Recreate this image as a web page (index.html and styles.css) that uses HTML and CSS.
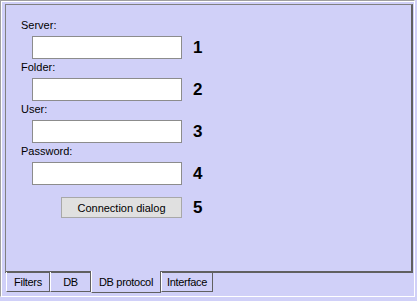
FILE: index.html
```html
<!DOCTYPE html>
<html lang="en">
<head>
    <meta charset="UTF-8">
    <title>DB protocol</title>
    <link rel="stylesheet" href="styles.css">
</head>
<body>
    <div class="frame">
        <div class="page">
            <div class="field">
                <div class="label">Server:</div>
                <div class="row">
                    <input type="text" class="edit">
                    <span class="num">1</span>
                </div>
            </div>
            <div class="field">
                <div class="label">Folder:</div>
                <div class="row">
                    <input type="text" class="edit">
                    <span class="num">2</span>
                </div>
            </div>
            <div class="field">
                <div class="label">User:</div>
                <div class="row">
                    <input type="text" class="edit">
                    <span class="num">3</span>
                </div>
            </div>
            <div class="field">
                <div class="label">Password:</div>
                <div class="row">
                    <input type="password" class="edit">
                    <span class="num">4</span>
                </div>
            </div>
            <div class="row button-row">
                <button class="dialog">Connection dialog</button>
                <span class="num">5</span>
            </div>
        </div>
        <div class="tabs">
            <div class="tab tab-filters">Filters</div>
            <div class="tab tab-db">DB</div>
            <div class="tab tab-protocol active">DB protocol</div>
            <div class="tab tab-interface">Interface</div>
        </div>
    </div>
</body>
</html>
```

FILE: styles.css
```css
* {
    box-sizing: border-box;
}

body {
    margin: 0;
    background: #d0d0f8;
    font-family: "Liberation Sans", Arial, sans-serif;
    font-size: 11px;
    color: #000;
}

.frame {
    width: 415px;
    height: 297px;
    border-top: 1px solid #a0a0a0;
    border-left: 1px solid #a0a0a0;
    border-right: 1px solid #fff;
    border-bottom: 1px solid #fff;
    box-shadow: inset 1px 1px 0 #fff;
    padding: 3px 0 0 4px;
}

.page {
    width: 408px;
    height: 269px;
    border-top: 1px solid #808080;
    border-left: 1px solid #808080;
    border-right: 2px solid #606060;
    border-bottom: 2px solid #606060;
    padding: 14px 0 0 15px;
}

.label {
    height: 13px;
    line-height: 13px;
    margin-bottom: 4px;
}

.field {
    margin-bottom: 2px;
}

.row {
    display: flex;
    align-items: center;
    gap: 11px;
    padding-left: 11px;
}

.edit {
    width: 150px;
    height: 23px;
    margin: 0;
    border: 1px solid #8c8c8c;
    background: #fff;
    outline: none;
}

.num {
    font-size: 17px;
    font-weight: bold;
    line-height: 20px;
}

.button-row {
    margin-top: 12px;
    padding-left: 40px;
}

.dialog {
    width: 121px;
    height: 21px;
    margin: 0;
    padding: 0;
    border: 1px solid #a8a8a8;
    background: #e0e0e0;
    font-family: inherit;
    font-size: 11px;
    color: #000;
}

.tabs {
    display: flex;
    padding-left: 1px;
}

.tab {
    height: 20px;
    line-height: 20px;
    text-align: center;
    letter-spacing: -0.3px;
    border-left: 1px solid #fff;
    border-right: 1px solid #606060;
    border-bottom: 1px solid #606060;
    margin-top: -1px;
}

.tab-filters {
    width: 44px;
}

.tab-db {
    width: 41px;
}

.tab-protocol {
    width: 70px;
}

.tab-interface {
    width: 52px;
}

.active {
    height: 22px;
    margin-top: -2px;
    padding-top: 1px;
    background: #d0d0f8;
}
```
